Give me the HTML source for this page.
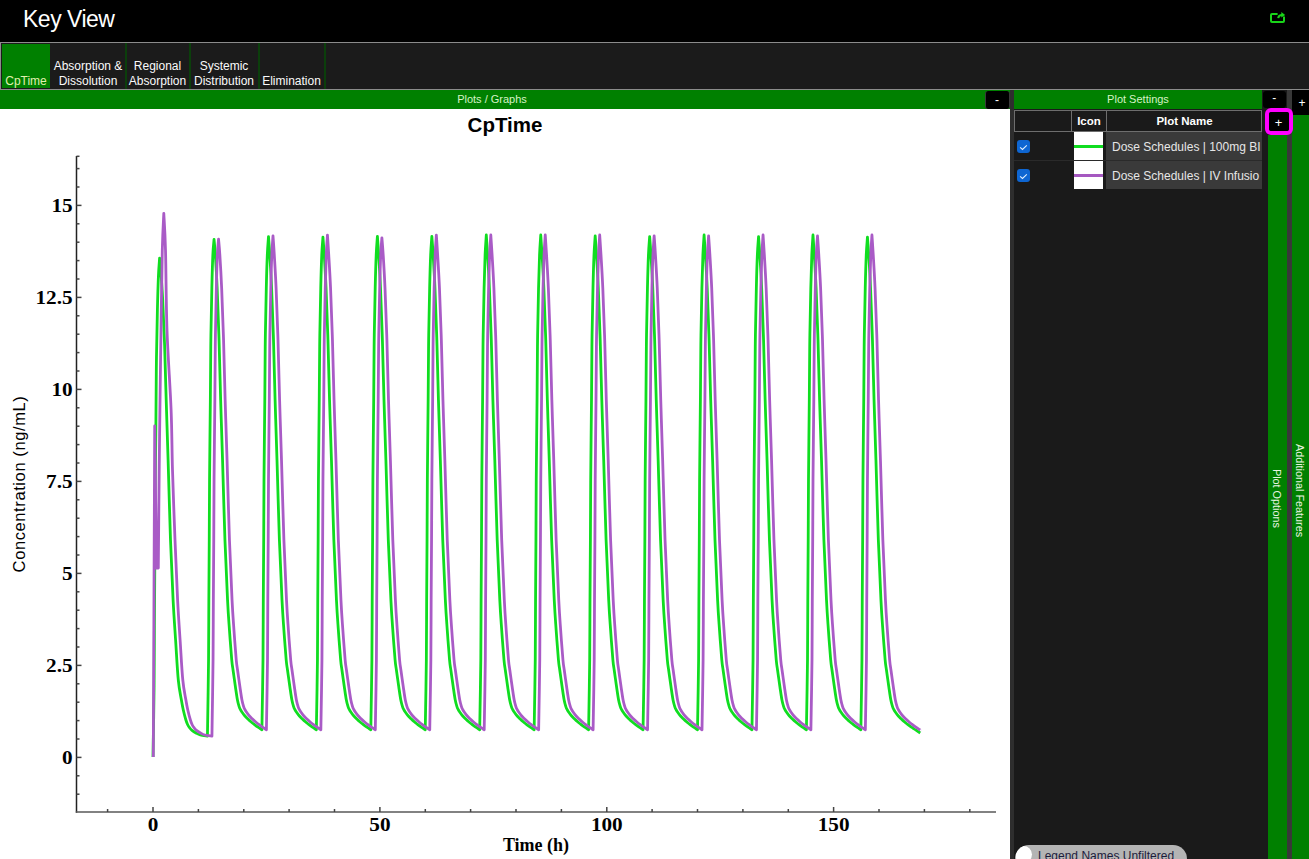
<!DOCTYPE html>
<html><head><meta charset="utf-8">
<style>
*{margin:0;padding:0;box-sizing:border-box}
html,body{width:1309px;height:859px;overflow:hidden;background:#000;font-family:"Liberation Sans",sans-serif}
.abs{position:absolute}
#title{left:23px;top:5px;font-size:23px;letter-spacing:-0.5px;color:#fff;line-height:28px;white-space:nowrap}
#hline{left:0;top:42px;width:1309px;height:1px;background:#8c8c8c}
#tabs{left:0;top:43px;width:1309px;height:47px;background:#1b1b1b;border-left:1px solid #8c8c8c;border-bottom:1px solid #8c8c8c}
.tab{position:absolute;top:0;height:46px;color:#fafafa;font-size:12px;line-height:14.4px;text-align:center;white-space:nowrap}
.tab span{position:absolute;left:0;right:0;bottom:0.8px}
.sep{position:absolute;top:0;width:2px;height:46px;background:#0b3f0b}
#greenbar{left:0;top:90px;width:1010px;padding-right:26px;height:19px;background:#008000;color:#d6f2c6;font-size:11px;text-align:center;line-height:18px}
.btn{position:absolute;background:#000;color:#fff;border-radius:3px;text-align:center;font-size:12px}
#plot{left:0;top:109px;width:1010px;height:750px;background:#fff}
#psep{left:1010px;top:90px;width:4px;height:769px;background:#2e2e2e}
#rpanel{left:1014px;top:109px;width:254px;height:750px;background:#1a1a1a}
#psbar{left:1014px;top:90px;width:248px;height:19px;background:#008000;color:#d6f2c6;font-size:11px;text-align:center;line-height:18px}
#rdiv{left:1287px;top:90px;width:5px;height:769px;background:#383838}
#rgap{left:1262px;top:109px;width:6px;height:750px;background:#1a1a1a}
.vstrip{position:absolute;background:#008000;color:#e8f4e0;font-size:10.8px}
.vtext{position:absolute;white-space:nowrap;transform-origin:0 0;transform:rotate(90deg)}
table{border-collapse:collapse}
#thead{left:1014px;top:110px;width:248px;height:22px;background:#1a1a1a;border:1px solid #6e6e6e}
.th{position:absolute;top:0;height:20px;color:#fff;font-weight:bold;font-size:11.5px;line-height:21px;text-align:center}
.row{position:absolute;left:1014px;width:248px;height:28px;background:#1a1a1a}
.chk{position:absolute;left:3px;top:8px;width:12.5px;height:12.5px;background:#0e66d2;border-radius:3px}
.icon{position:absolute;left:60px;top:0;width:29px;height:28px;background:#fff}
.icon i{position:absolute;left:0;width:29px;height:3px;top:13px}
.name{position:absolute;left:92px;top:0;width:156px;height:28px;background:#3a3a3a;color:#e6e6e6;font-size:12px;line-height:31px;padding-left:6px;white-space:nowrap;overflow:hidden}
#toggle{left:1015px;top:845px;width:172px;height:28px;background:#b4b4b4;border-radius:14px;overflow:hidden}
#toggle .knob{position:absolute;left:0px;top:1px;width:17px;height:17px;border-radius:9px;background:#fff}
#toggle span{position:absolute;left:23px;top:4px;font-size:12px;color:#1c1c3c;white-space:nowrap}
svg text{font-family:"Liberation Serif",serif;font-weight:bold}
</style></head>
<body>
<div id="title" class="abs">Key View</div>
<svg class="abs" style="left:1268px;top:10px" width="20" height="16" viewBox="0 0 20 16">
 <path d="M9.6,4 H4 Q3,4 3,5 V11 Q3,12 4,12 H15 Q16,12 16,11 V6.6" fill="none" stroke="#19d419" stroke-width="2"/>
 <path d="M10.2,8.2 C10.4,6.2 11.8,4.9 14.2,4.9" fill="none" stroke="#19d419" stroke-width="2"/>
 <path d="M13.3,2 L17.2,4.9 L13.3,7.6 Z" fill="#19d419"/>
</svg>
<div id="hline" class="abs"></div>
<div id="tabs" class="abs">
 <div class="tab" style="left:1px;top:1px;width:48px;height:44px;background:#008000;color:#e0f0b0"><span style="bottom:0">CpTime</span></div>
 <div class="tab" style="left:50px;width:74px"><span>Absorption &amp;<br>Dissolution</span></div>
 <div class="sep" style="left:124px"></div>
 <div class="tab" style="left:125px;width:63px"><span>Regional<br>Absorption</span></div>
 <div class="sep" style="left:188px"></div>
 <div class="tab" style="left:189px;width:68px"><span>Systemic<br>Distribution</span></div>
 <div class="sep" style="left:257px"></div>
 <div class="tab" style="left:258px;width:65px"><span>Elimination</span></div>
 <div class="sep" style="left:323px"></div>
</div>
<div id="greenbar" class="abs">Plots / Graphs</div>
<div class="btn" style="left:984.5px;top:90.5px;width:25px;height:18px;line-height:19px;border:1px solid #3a3a3a;border-top:0;border-bottom:0">-</div>
<div id="plot" class="abs"></div>
<div id="psep" class="abs"></div>
<div id="rpanel" class="abs"></div>
<div id="psbar" class="abs">Plot Settings</div>
<div class="abs" style="left:1262px;top:90px;width:25px;height:19px;background:#1a1a1a"></div>
<div class="btn" style="left:1262.5px;top:91px;width:23.5px;height:17px;line-height:15px">-</div>
<div id="rdiv" class="abs"></div>
<div class="btn" style="left:1292.5px;top:91px;width:19px;height:23.5px;line-height:25px;border-radius:3px">+</div>
<div class="vstrip" style="left:1292px;top:115px;width:17px;height:744px"><div class="vtext" style="left:14px;top:329px">Additional Features</div></div>
<div class="vstrip" style="left:1268px;top:135px;width:19px;height:724px"><div class="vtext" style="left:15px;top:334px">Plot Options</div></div>
<div class="abs" style="left:1265px;top:108px;width:28px;height:27px;border:4px solid #ff00ff;border-radius:6px;background:#000"></div>
<div class="btn" style="left:1268.5px;top:112px;width:20px;height:19px;line-height:21px;font-size:13px">+</div>
<div id="thead" class="abs">
 <div class="abs" style="left:56px;top:0;width:1px;height:20px;background:#6e6e6e"></div>
 <div class="abs" style="left:91px;top:0;width:1px;height:20px;background:#6e6e6e"></div>
 <div class="th" style="left:57px;width:34px">Icon</div>
 <div class="th" style="left:92px;width:155px">Plot Name</div>
</div>
<div class="row" style="top:132px"><div class="chk"><svg width="13" height="13" viewBox="0 0 13 13"><path d="M3.1,6.3 L5.5,8.5 L9.8,4.3" fill="none" stroke="#dfefff" stroke-width="1.1"/></svg></div><div class="icon"><i style="background:#10dd20"></i></div><div class="name">Dose Schedules | 100mg BI</div></div>
<div class="abs" style="left:1014px;top:160px;width:248px;height:1px;background:#2a2a2a"></div>
<div class="row" style="top:161px"><div class="chk"><svg width="13" height="13" viewBox="0 0 13 13"><path d="M3.1,6.3 L5.5,8.5 L9.8,4.3" fill="none" stroke="#dfefff" stroke-width="1.1"/></svg></div><div class="icon"><i style="background:#a558c0"></i></div><div class="name">Dose Schedules | IV Infusio</div></div>
<div id="toggle" class="abs"><div class="knob"></div><span>Legend Names Unfiltered</span></div>

<svg class="abs" style="left:0;top:0" width="1010" height="859" viewBox="0 0 1010 859">
 <text x="505" y="132" text-anchor="middle" style="font-family:'Liberation Sans',sans-serif;font-size:20.5px">CpTime</text>
 <g stroke="#444" stroke-width="1.5" fill="none">
  <line x1="76.5" y1="156" x2="76.5" y2="812.7" stroke="#222"/>
  <line x1="75.8" y1="812" x2="996" y2="812" stroke="#595959"/>
  <line x1="76.5" y1="156.3" x2="79.5" y2="156.3"/>
  <line x1="76.5" y1="794.2" x2="79.5" y2="794.2"/>
<line x1="76.5" y1="775.8" x2="79.5" y2="775.8"/>
<line x1="76.5" y1="757.4" x2="81.5" y2="757.4"/>
<line x1="76.5" y1="739" x2="79.5" y2="739"/>
<line x1="76.5" y1="720.6" x2="79.5" y2="720.6"/>
<line x1="76.5" y1="702.2" x2="79.5" y2="702.2"/>
<line x1="76.5" y1="683.8" x2="79.5" y2="683.8"/>
<line x1="76.5" y1="665.4" x2="81.5" y2="665.4"/>
<line x1="76.5" y1="647" x2="79.5" y2="647"/>
<line x1="76.5" y1="628.6" x2="79.5" y2="628.6"/>
<line x1="76.5" y1="610.2" x2="79.5" y2="610.2"/>
<line x1="76.5" y1="591.8" x2="79.5" y2="591.8"/>
<line x1="76.5" y1="573.4" x2="81.5" y2="573.4"/>
<line x1="76.5" y1="555" x2="79.5" y2="555"/>
<line x1="76.5" y1="536.6" x2="79.5" y2="536.6"/>
<line x1="76.5" y1="518.2" x2="79.5" y2="518.2"/>
<line x1="76.5" y1="499.8" x2="79.5" y2="499.8"/>
<line x1="76.5" y1="481.4" x2="81.5" y2="481.4"/>
<line x1="76.5" y1="463" x2="79.5" y2="463"/>
<line x1="76.5" y1="444.6" x2="79.5" y2="444.6"/>
<line x1="76.5" y1="426.2" x2="79.5" y2="426.2"/>
<line x1="76.5" y1="407.8" x2="79.5" y2="407.8"/>
<line x1="76.5" y1="389.4" x2="81.5" y2="389.4"/>
<line x1="76.5" y1="371" x2="79.5" y2="371"/>
<line x1="76.5" y1="352.6" x2="79.5" y2="352.6"/>
<line x1="76.5" y1="334.2" x2="79.5" y2="334.2"/>
<line x1="76.5" y1="315.8" x2="79.5" y2="315.8"/>
<line x1="76.5" y1="297.4" x2="81.5" y2="297.4"/>
<line x1="76.5" y1="279" x2="79.5" y2="279"/>
<line x1="76.5" y1="260.6" x2="79.5" y2="260.6"/>
<line x1="76.5" y1="242.2" x2="79.5" y2="242.2"/>
<line x1="76.5" y1="223.8" x2="79.5" y2="223.8"/>
<line x1="76.5" y1="205.4" x2="81.5" y2="205.4"/>
<line x1="76.5" y1="187" x2="79.5" y2="187"/>
<line x1="76.5" y1="168.6" x2="79.5" y2="168.6"/>
<line x1="107.6" y1="812" x2="107.6" y2="809"/>
<line x1="153" y1="812" x2="153" y2="807"/>
<line x1="198.4" y1="812" x2="198.4" y2="809"/>
<line x1="243.8" y1="812" x2="243.8" y2="809"/>
<line x1="289.1" y1="812" x2="289.1" y2="809"/>
<line x1="334.5" y1="812" x2="334.5" y2="809"/>
<line x1="379.9" y1="812" x2="379.9" y2="807"/>
<line x1="425.3" y1="812" x2="425.3" y2="809"/>
<line x1="470.6" y1="812" x2="470.6" y2="809"/>
<line x1="516" y1="812" x2="516" y2="809"/>
<line x1="561.4" y1="812" x2="561.4" y2="809"/>
<line x1="606.8" y1="812" x2="606.8" y2="807"/>
<line x1="652.1" y1="812" x2="652.1" y2="809"/>
<line x1="697.5" y1="812" x2="697.5" y2="809"/>
<line x1="742.9" y1="812" x2="742.9" y2="809"/>
<line x1="788.3" y1="812" x2="788.3" y2="809"/>
<line x1="833.6" y1="812" x2="833.6" y2="807"/>
<line x1="879" y1="812" x2="879" y2="809"/>
<line x1="924.4" y1="812" x2="924.4" y2="809"/>
<line x1="969.8" y1="812" x2="969.8" y2="809"/>
 </g>
 <g style="font-size:18px" fill="#000"><text transform="translate(72.6,764.4) scale(1.18,1)" text-anchor="end">0</text><text transform="translate(72.6,672.4) scale(1.18,1)" text-anchor="end">2.5</text><text transform="translate(72.6,580.4) scale(1.18,1)" text-anchor="end">5</text><text transform="translate(72.6,488.4) scale(1.18,1)" text-anchor="end">7.5</text><text transform="translate(72.6,396.4) scale(1.18,1)" text-anchor="end">10</text><text transform="translate(72.6,304.4) scale(1.18,1)" text-anchor="end">12.5</text><text transform="translate(72.6,212.4) scale(1.18,1)" text-anchor="end">15</text><text transform="translate(153,830.8) scale(1.18,1)" text-anchor="middle">0</text><text transform="translate(379.9,830.8) scale(1.18,1)" text-anchor="middle">50</text><text transform="translate(606.8,830.8) scale(1.18,1)" text-anchor="middle">100</text><text transform="translate(833.6,830.8) scale(1.18,1)" text-anchor="middle">150</text></g>
 <text x="536" y="851" text-anchor="middle" style="font-size:18px">Time (h)</text>
 <text transform="translate(25,484) rotate(-90)" text-anchor="middle" style="font-family:'Liberation Sans',sans-serif;font-weight:normal;font-size:16.5px;letter-spacing:0.6px">Concentration (ng/mL)</text>
 <path d="M153,757 C153.18,745.20 153.87,708.13 154.10,686.22 C154.33,664.31 154.28,645.78 154.40,625.55 C154.52,605.33 154.68,585.11 154.80,564.89 C154.92,544.66 154.92,527.81 155.10,504.22 C155.28,480.63 155.68,446.92 155.90,423.33 C156.12,399.74 156.15,381.54 156.40,362.66 C156.65,343.79 157.07,324.41 157.40,310.08 C157.73,295.76 158.03,285.36 158.40,276.72 C158.77,268.07 159.40,261.29 159.60,258.20 C159.82,260.50 160.38,265.03 160.90,272.00 C161.42,278.97 162.08,287.83 162.70,300.00 C163.32,312.17 164.02,328.33 164.60,345.00 C165.18,361.67 165.62,380.83 166.20,400.00 C166.78,419.17 167.38,436.67 168.10,460.00 C168.82,483.33 169.67,516.67 170.50,540.00 C171.33,563.33 172.25,583.33 173.10,600.00 C173.95,616.67 174.73,626.67 175.60,640.00 C176.47,653.33 177.33,670.00 178.30,680.00 C179.27,690.00 180.57,695.00 181.40,700.00 C182.23,705.00 182.55,706.67 183.30,710.00 C184.05,713.33 185.15,717.50 185.90,720.00 C186.65,722.50 187.15,723.67 187.80,725.00 C188.45,726.33 189.10,727.12 189.80,728.00 C190.50,728.88 190.97,729.47 192.00,730.30 C193.03,731.13 194.62,732.22 196.00,733.00 C197.38,733.78 198.39,734.50 200.30,735.00 C202.21,735.50 206.26,735.83 207.45,736.00 C207.63,723.33 208.32,682.67 208.55,660.00 C208.78,637.33 208.73,620.00 208.85,600.00 C208.97,580.00 209.13,560.00 209.25,540.00 C209.37,520.00 209.37,503.33 209.55,480.00 C209.73,456.67 210.13,423.33 210.35,400.00 C210.57,376.67 210.60,358.67 210.85,340.00 C211.10,321.33 211.52,302.17 211.85,288.00 C212.18,273.83 212.48,263.10 212.85,255.00 C213.22,246.90 213.85,242.00 214.05,239.40 C214.27,242.00 214.83,246.90 215.35,255.00 C215.87,263.10 216.53,273.83 217.15,288.00 C217.77,302.17 218.47,321.33 219.05,340.00 C219.63,358.67 220.07,380.00 220.65,400.00 C221.23,420.00 221.83,436.67 222.55,460.00 C223.27,483.33 224.12,516.67 224.95,540.00 C225.78,563.33 226.80,585.00 227.55,600.00 C228.30,615.00 228.75,620.00 229.45,630.00 C230.15,640.00 231.15,653.33 231.75,660.00 C232.35,666.67 232.43,665.50 233.05,670.00 C233.67,674.50 234.72,682.00 235.45,687.00 C236.18,692.00 236.83,696.73 237.45,700.00 C238.07,703.27 238.62,704.93 239.15,706.60 C239.68,708.27 240.10,708.97 240.65,710.00 C241.20,711.03 241.73,711.80 242.45,712.80 C243.17,713.80 244.03,714.97 244.95,716.00 C245.87,717.03 246.95,718.03 247.95,719.00 C248.95,719.97 249.95,720.93 250.95,721.80 C251.95,722.67 252.78,723.30 253.95,724.20 C255.12,725.10 256.62,726.28 257.95,727.20 C259.27,728.12 261.24,729.28 261.90,729.70 C262.08,718.08 262.77,681.62 263.00,660.00 C263.23,638.38 263.18,620.00 263.30,600.00 C263.42,580.00 263.58,560.00 263.70,540.00 C263.82,520.00 263.82,503.33 264.00,480.00 C264.18,456.67 264.58,423.33 264.80,400.00 C265.02,376.67 265.05,358.67 265.30,340.00 C265.55,321.33 265.97,302.17 266.30,288.00 C266.63,273.83 266.93,263.55 267.30,255.00 C267.67,246.45 268.30,239.75 268.50,236.70 C268.72,239.75 269.28,246.45 269.80,255.00 C270.32,263.55 270.98,273.83 271.60,288.00 C272.22,302.17 272.92,321.33 273.50,340.00 C274.08,358.67 274.52,380.00 275.10,400.00 C275.68,420.00 276.28,436.67 277.00,460.00 C277.72,483.33 278.57,516.67 279.40,540.00 C280.23,563.33 281.25,585.00 282.00,600.00 C282.75,615.00 283.20,620.00 283.90,630.00 C284.60,640.00 285.60,653.33 286.20,660.00 C286.80,666.67 286.88,665.50 287.50,670.00 C288.12,674.50 289.17,682.00 289.90,687.00 C290.63,692.00 291.28,696.73 291.90,700.00 C292.52,703.27 293.07,704.93 293.60,706.60 C294.13,708.27 294.55,708.97 295.10,710.00 C295.65,711.03 296.18,711.80 296.90,712.80 C297.62,713.80 298.48,714.97 299.40,716.00 C300.32,717.03 301.40,718.03 302.40,719.00 C303.40,719.97 304.40,720.93 305.40,721.80 C306.40,722.67 307.23,723.30 308.40,724.20 C309.57,725.10 311.07,726.28 312.40,727.20 C313.72,728.12 315.69,729.28 316.35,729.70 C316.53,718.08 317.22,681.62 317.45,660.00 C317.68,638.38 317.63,620.00 317.75,600.00 C317.87,580.00 318.03,560.00 318.15,540.00 C318.27,520.00 318.27,503.33 318.45,480.00 C318.63,456.67 319.03,423.33 319.25,400.00 C319.47,376.67 319.50,358.67 319.75,340.00 C320.00,321.33 320.42,302.17 320.75,288.00 C321.08,273.83 321.38,263.47 321.75,255.00 C322.12,246.53 322.75,240.17 322.95,237.20 C323.17,240.17 323.73,246.53 324.25,255.00 C324.77,263.47 325.43,273.83 326.05,288.00 C326.67,302.17 327.37,321.33 327.95,340.00 C328.53,358.67 328.97,380.00 329.55,400.00 C330.13,420.00 330.73,436.67 331.45,460.00 C332.17,483.33 333.02,516.67 333.85,540.00 C334.68,563.33 335.70,585.00 336.45,600.00 C337.20,615.00 337.65,620.00 338.35,630.00 C339.05,640.00 340.05,653.33 340.65,660.00 C341.25,666.67 341.33,665.50 341.95,670.00 C342.57,674.50 343.62,682.00 344.35,687.00 C345.08,692.00 345.73,696.73 346.35,700.00 C346.97,703.27 347.52,704.93 348.05,706.60 C348.58,708.27 349.00,708.97 349.55,710.00 C350.10,711.03 350.63,711.80 351.35,712.80 C352.07,713.80 352.93,714.97 353.85,716.00 C354.77,717.03 355.85,718.03 356.85,719.00 C357.85,719.97 358.85,720.93 359.85,721.80 C360.85,722.67 361.68,723.30 362.85,724.20 C364.02,725.10 365.53,726.28 366.85,727.20 C368.18,728.12 370.14,729.28 370.80,729.70 C370.98,718.08 371.67,681.62 371.90,660.00 C372.13,638.38 372.08,620.00 372.20,600.00 C372.32,580.00 372.48,560.00 372.60,540.00 C372.72,520.00 372.72,503.33 372.90,480.00 C373.08,456.67 373.48,423.33 373.70,400.00 C373.92,376.67 373.95,358.67 374.20,340.00 C374.45,321.33 374.87,302.17 375.20,288.00 C375.53,273.83 375.83,263.60 376.20,255.00 C376.57,246.40 377.20,239.50 377.40,236.40 C377.62,239.50 378.18,246.40 378.70,255.00 C379.22,263.60 379.88,273.83 380.50,288.00 C381.12,302.17 381.82,321.33 382.40,340.00 C382.98,358.67 383.42,380.00 384.00,400.00 C384.58,420.00 385.18,436.67 385.90,460.00 C386.62,483.33 387.47,516.67 388.30,540.00 C389.13,563.33 390.15,585.00 390.90,600.00 C391.65,615.00 392.10,620.00 392.80,630.00 C393.50,640.00 394.50,653.33 395.10,660.00 C395.70,666.67 395.78,665.50 396.40,670.00 C397.02,674.50 398.07,682.00 398.80,687.00 C399.53,692.00 400.18,696.73 400.80,700.00 C401.42,703.27 401.97,704.93 402.50,706.60 C403.03,708.27 403.45,708.97 404.00,710.00 C404.55,711.03 405.08,711.80 405.80,712.80 C406.52,713.80 407.38,714.97 408.30,716.00 C409.22,717.03 410.30,718.03 411.30,719.00 C412.30,719.97 413.30,720.93 414.30,721.80 C415.30,722.67 416.13,723.30 417.30,724.20 C418.47,725.10 419.98,726.28 421.30,727.20 C422.62,728.12 424.59,729.28 425.25,729.70 C425.43,718.08 426.12,681.62 426.35,660.00 C426.58,638.38 426.53,620.00 426.65,600.00 C426.77,580.00 426.93,560.00 427.05,540.00 C427.17,520.00 427.17,503.33 427.35,480.00 C427.53,456.67 427.93,423.33 428.15,400.00 C428.37,376.67 428.40,358.67 428.65,340.00 C428.90,321.33 429.32,302.17 429.65,288.00 C429.98,273.83 430.28,263.60 430.65,255.00 C431.02,246.40 431.65,239.50 431.85,236.40 C432.07,239.50 432.63,246.40 433.15,255.00 C433.67,263.60 434.33,273.83 434.95,288.00 C435.57,302.17 436.27,321.33 436.85,340.00 C437.43,358.67 437.87,380.00 438.45,400.00 C439.03,420.00 439.63,436.67 440.35,460.00 C441.07,483.33 441.92,516.67 442.75,540.00 C443.58,563.33 444.60,585.00 445.35,600.00 C446.10,615.00 446.55,620.00 447.25,630.00 C447.95,640.00 448.95,653.33 449.55,660.00 C450.15,666.67 450.23,665.50 450.85,670.00 C451.47,674.50 452.52,682.00 453.25,687.00 C453.98,692.00 454.63,696.73 455.25,700.00 C455.87,703.27 456.42,704.93 456.95,706.60 C457.48,708.27 457.90,708.97 458.45,710.00 C459.00,711.03 459.53,711.80 460.25,712.80 C460.97,713.80 461.83,714.97 462.75,716.00 C463.67,717.03 464.75,718.03 465.75,719.00 C466.75,719.97 467.75,720.93 468.75,721.80 C469.75,722.67 470.58,723.30 471.75,724.20 C472.92,725.10 474.43,726.28 475.75,727.20 C477.07,728.12 479.04,729.28 479.70,729.70 C479.88,718.08 480.57,681.62 480.80,660.00 C481.03,638.38 480.98,620.00 481.10,600.00 C481.22,580.00 481.38,560.00 481.50,540.00 C481.62,520.00 481.62,503.33 481.80,480.00 C481.98,456.67 482.38,423.33 482.60,400.00 C482.82,376.67 482.85,358.67 483.10,340.00 C483.35,321.33 483.77,302.17 484.10,288.00 C484.43,273.83 484.73,263.83 485.10,255.00 C485.47,246.17 486.10,238.33 486.30,235.00 C486.52,238.33 487.08,246.17 487.60,255.00 C488.12,263.83 488.78,273.83 489.40,288.00 C490.02,302.17 490.72,321.33 491.30,340.00 C491.88,358.67 492.32,380.00 492.90,400.00 C493.48,420.00 494.08,436.67 494.80,460.00 C495.52,483.33 496.37,516.67 497.20,540.00 C498.03,563.33 499.05,585.00 499.80,600.00 C500.55,615.00 501.00,620.00 501.70,630.00 C502.40,640.00 503.40,653.33 504.00,660.00 C504.60,666.67 504.68,665.50 505.30,670.00 C505.92,674.50 506.97,682.00 507.70,687.00 C508.43,692.00 509.08,696.73 509.70,700.00 C510.32,703.27 510.87,704.93 511.40,706.60 C511.93,708.27 512.35,708.97 512.90,710.00 C513.45,711.03 513.98,711.80 514.70,712.80 C515.42,713.80 516.28,714.97 517.20,716.00 C518.12,717.03 519.20,718.03 520.20,719.00 C521.20,719.97 522.20,720.93 523.20,721.80 C524.20,722.67 525.03,723.30 526.20,724.20 C527.37,725.10 528.88,726.28 530.20,727.20 C531.53,728.12 533.49,729.28 534.15,729.70 C534.33,718.08 535.02,681.62 535.25,660.00 C535.48,638.38 535.43,620.00 535.55,600.00 C535.67,580.00 535.83,560.00 535.95,540.00 C536.07,520.00 536.07,503.33 536.25,480.00 C536.43,456.67 536.83,423.33 537.05,400.00 C537.27,376.67 537.30,358.67 537.55,340.00 C537.80,321.33 538.22,302.17 538.55,288.00 C538.88,273.83 539.18,263.83 539.55,255.00 C539.92,246.17 540.55,238.33 540.75,235.00 C540.97,238.33 541.53,246.17 542.05,255.00 C542.57,263.83 543.23,273.83 543.85,288.00 C544.47,302.17 545.17,321.33 545.75,340.00 C546.33,358.67 546.77,380.00 547.35,400.00 C547.93,420.00 548.53,436.67 549.25,460.00 C549.97,483.33 550.82,516.67 551.65,540.00 C552.48,563.33 553.50,585.00 554.25,600.00 C555.00,615.00 555.45,620.00 556.15,630.00 C556.85,640.00 557.85,653.33 558.45,660.00 C559.05,666.67 559.13,665.50 559.75,670.00 C560.37,674.50 561.42,682.00 562.15,687.00 C562.88,692.00 563.53,696.73 564.15,700.00 C564.77,703.27 565.32,704.93 565.85,706.60 C566.38,708.27 566.80,708.97 567.35,710.00 C567.90,711.03 568.43,711.80 569.15,712.80 C569.87,713.80 570.73,714.97 571.65,716.00 C572.57,717.03 573.65,718.03 574.65,719.00 C575.65,719.97 576.65,720.93 577.65,721.80 C578.65,722.67 579.48,723.30 580.65,724.20 C581.82,725.10 583.33,726.28 584.65,727.20 C585.98,728.12 587.94,729.28 588.60,729.70 C588.78,718.08 589.47,681.62 589.70,660.00 C589.93,638.38 589.88,620.00 590.00,600.00 C590.12,580.00 590.28,560.00 590.40,540.00 C590.52,520.00 590.52,503.33 590.70,480.00 C590.88,456.67 591.28,423.33 591.50,400.00 C591.72,376.67 591.75,358.67 592.00,340.00 C592.25,321.33 592.67,302.17 593.00,288.00 C593.33,273.83 593.63,263.70 594.00,255.00 C594.37,246.30 595.00,239.00 595.20,235.80 C595.42,239.00 595.98,246.30 596.50,255.00 C597.02,263.70 597.68,273.83 598.30,288.00 C598.92,302.17 599.62,321.33 600.20,340.00 C600.78,358.67 601.22,380.00 601.80,400.00 C602.38,420.00 602.98,436.67 603.70,460.00 C604.42,483.33 605.27,516.67 606.10,540.00 C606.93,563.33 607.95,585.00 608.70,600.00 C609.45,615.00 609.90,620.00 610.60,630.00 C611.30,640.00 612.30,653.33 612.90,660.00 C613.50,666.67 613.58,665.50 614.20,670.00 C614.82,674.50 615.87,682.00 616.60,687.00 C617.33,692.00 617.98,696.73 618.60,700.00 C619.22,703.27 619.77,704.93 620.30,706.60 C620.83,708.27 621.25,708.97 621.80,710.00 C622.35,711.03 622.88,711.80 623.60,712.80 C624.32,713.80 625.18,714.97 626.10,716.00 C627.02,717.03 628.10,718.03 629.10,719.00 C630.10,719.97 631.10,720.93 632.10,721.80 C633.10,722.67 633.93,723.30 635.10,724.20 C636.27,725.10 637.77,726.28 639.10,727.20 C640.43,728.12 642.39,729.28 643.05,729.70 C643.23,718.08 643.92,681.62 644.15,660.00 C644.38,638.38 644.33,620.00 644.45,600.00 C644.57,580.00 644.73,560.00 644.85,540.00 C644.97,520.00 644.97,503.33 645.15,480.00 C645.33,456.67 645.73,423.33 645.95,400.00 C646.17,376.67 646.20,358.67 646.45,340.00 C646.70,321.33 647.12,302.17 647.45,288.00 C647.78,273.83 648.08,263.55 648.45,255.00 C648.82,246.45 649.45,239.75 649.65,236.70 C649.87,239.75 650.43,246.45 650.95,255.00 C651.47,263.55 652.13,273.83 652.75,288.00 C653.37,302.17 654.07,321.33 654.65,340.00 C655.23,358.67 655.67,380.00 656.25,400.00 C656.83,420.00 657.43,436.67 658.15,460.00 C658.87,483.33 659.72,516.67 660.55,540.00 C661.38,563.33 662.40,585.00 663.15,600.00 C663.90,615.00 664.35,620.00 665.05,630.00 C665.75,640.00 666.75,653.33 667.35,660.00 C667.95,666.67 668.03,665.50 668.65,670.00 C669.27,674.50 670.32,682.00 671.05,687.00 C671.78,692.00 672.43,696.73 673.05,700.00 C673.67,703.27 674.22,704.93 674.75,706.60 C675.28,708.27 675.70,708.97 676.25,710.00 C676.80,711.03 677.33,711.80 678.05,712.80 C678.77,713.80 679.63,714.97 680.55,716.00 C681.47,717.03 682.55,718.03 683.55,719.00 C684.55,719.97 685.55,720.93 686.55,721.80 C687.55,722.67 688.38,723.30 689.55,724.20 C690.72,725.10 692.22,726.28 693.55,727.20 C694.88,728.12 696.84,729.28 697.50,729.70 C697.68,718.08 698.37,681.62 698.60,660.00 C698.83,638.38 698.78,620.00 698.90,600.00 C699.02,580.00 699.18,560.00 699.30,540.00 C699.42,520.00 699.42,503.33 699.60,480.00 C699.78,456.67 700.18,423.33 700.40,400.00 C700.62,376.67 700.65,358.67 700.90,340.00 C701.15,321.33 701.57,302.17 701.90,288.00 C702.23,273.83 702.53,263.83 702.90,255.00 C703.27,246.17 703.90,238.33 704.10,235.00 C704.32,238.33 704.88,246.17 705.40,255.00 C705.92,263.83 706.58,273.83 707.20,288.00 C707.82,302.17 708.52,321.33 709.10,340.00 C709.68,358.67 710.12,380.00 710.70,400.00 C711.28,420.00 711.88,436.67 712.60,460.00 C713.32,483.33 714.17,516.67 715.00,540.00 C715.83,563.33 716.85,585.00 717.60,600.00 C718.35,615.00 718.80,620.00 719.50,630.00 C720.20,640.00 721.20,653.33 721.80,660.00 C722.40,666.67 722.48,665.50 723.10,670.00 C723.72,674.50 724.77,682.00 725.50,687.00 C726.23,692.00 726.88,696.73 727.50,700.00 C728.12,703.27 728.67,704.93 729.20,706.60 C729.73,708.27 730.15,708.97 730.70,710.00 C731.25,711.03 731.78,711.80 732.50,712.80 C733.22,713.80 734.08,714.97 735.00,716.00 C735.92,717.03 737.00,718.03 738.00,719.00 C739.00,719.97 740.00,720.93 741.00,721.80 C742.00,722.67 742.83,723.30 744.00,724.20 C745.17,725.10 746.67,726.28 748.00,727.20 C749.33,728.12 751.29,729.28 751.95,729.70 C752.13,718.08 752.82,681.62 753.05,660.00 C753.28,638.38 753.23,620.00 753.35,600.00 C753.47,580.00 753.63,560.00 753.75,540.00 C753.87,520.00 753.87,503.33 754.05,480.00 C754.23,456.67 754.63,423.33 754.85,400.00 C755.07,376.67 755.10,358.67 755.35,340.00 C755.60,321.33 756.02,302.17 756.35,288.00 C756.68,273.83 756.98,263.55 757.35,255.00 C757.72,246.45 758.35,239.75 758.55,236.70 C758.77,239.75 759.33,246.45 759.85,255.00 C760.37,263.55 761.03,273.83 761.65,288.00 C762.27,302.17 762.97,321.33 763.55,340.00 C764.13,358.67 764.57,380.00 765.15,400.00 C765.73,420.00 766.33,436.67 767.05,460.00 C767.77,483.33 768.62,516.67 769.45,540.00 C770.28,563.33 771.30,585.00 772.05,600.00 C772.80,615.00 773.25,620.00 773.95,630.00 C774.65,640.00 775.65,653.33 776.25,660.00 C776.85,666.67 776.93,665.50 777.55,670.00 C778.17,674.50 779.22,682.00 779.95,687.00 C780.68,692.00 781.33,696.73 781.95,700.00 C782.57,703.27 783.12,704.93 783.65,706.60 C784.18,708.27 784.60,708.97 785.15,710.00 C785.70,711.03 786.23,711.80 786.95,712.80 C787.67,713.80 788.53,714.97 789.45,716.00 C790.37,717.03 791.45,718.03 792.45,719.00 C793.45,719.97 794.45,720.93 795.45,721.80 C796.45,722.67 797.28,723.30 798.45,724.20 C799.62,725.10 801.12,726.28 802.45,727.20 C803.78,728.12 805.74,729.28 806.40,729.70 C806.58,718.08 807.27,681.62 807.50,660.00 C807.73,638.38 807.68,620.00 807.80,600.00 C807.92,580.00 808.08,560.00 808.20,540.00 C808.32,520.00 808.32,503.33 808.50,480.00 C808.68,456.67 809.08,423.33 809.30,400.00 C809.52,376.67 809.55,358.67 809.80,340.00 C810.05,321.33 810.47,302.17 810.80,288.00 C811.13,273.83 811.43,263.83 811.80,255.00 C812.17,246.17 812.80,238.33 813.00,235.00 C813.22,238.33 813.78,246.17 814.30,255.00 C814.82,263.83 815.48,273.83 816.10,288.00 C816.72,302.17 817.42,321.33 818.00,340.00 C818.58,358.67 819.02,380.00 819.60,400.00 C820.18,420.00 820.78,436.67 821.50,460.00 C822.22,483.33 823.07,516.67 823.90,540.00 C824.73,563.33 825.75,585.00 826.50,600.00 C827.25,615.00 827.70,620.00 828.40,630.00 C829.10,640.00 830.10,653.33 830.70,660.00 C831.30,666.67 831.38,665.50 832.00,670.00 C832.62,674.50 833.67,682.00 834.40,687.00 C835.13,692.00 835.78,696.73 836.40,700.00 C837.02,703.27 837.57,704.93 838.10,706.60 C838.63,708.27 839.05,708.97 839.60,710.00 C840.15,711.03 840.68,711.80 841.40,712.80 C842.12,713.80 842.98,714.97 843.90,716.00 C844.82,717.03 845.90,718.03 846.90,719.00 C847.90,719.97 848.90,720.93 849.90,721.80 C850.90,722.67 851.73,723.30 852.90,724.20 C854.07,725.10 855.58,726.28 856.90,727.20 C858.23,728.12 860.19,729.28 860.85,729.70 C861.03,718.08 861.72,681.62 861.95,660.00 C862.18,638.38 862.13,620.00 862.25,600.00 C862.37,580.00 862.53,560.00 862.65,540.00 C862.77,520.00 862.77,503.33 862.95,480.00 C863.13,456.67 863.53,423.33 863.75,400.00 C863.97,376.67 864.00,358.67 864.25,340.00 C864.50,321.33 864.92,302.17 865.25,288.00 C865.58,273.83 865.88,263.47 866.25,255.00 C866.62,246.53 867.25,240.17 867.45,237.20 C867.67,240.17 868.23,246.53 868.75,255.00 C869.27,263.47 869.93,273.83 870.55,288.00 C871.17,302.17 871.87,321.33 872.45,340.00 C873.03,358.67 873.47,380.00 874.05,400.00 C874.63,420.00 875.23,436.67 875.95,460.00 C876.67,483.33 877.52,516.67 878.35,540.00 C879.18,563.33 880.20,585.00 880.95,600.00 C881.70,615.00 882.15,620.00 882.85,630.00 C883.55,640.00 884.55,653.33 885.15,660.00 C885.75,666.67 885.83,665.50 886.45,670.00 C887.07,674.50 888.12,682.00 888.85,687.00 C889.58,692.00 890.23,696.73 890.85,700.00 C891.47,703.27 892.02,704.93 892.55,706.60 C893.08,708.27 893.50,708.97 894.05,710.00 C894.60,711.03 895.13,711.80 895.85,712.80 C896.57,713.80 897.43,714.97 898.35,716.00 C899.27,717.03 900.35,718.03 901.35,719.00 C902.35,719.97 903.35,720.93 904.35,721.80 C905.35,722.67 906.18,723.30 907.35,724.20 C908.52,725.10 910.02,726.28 911.35,727.20 C912.68,728.12 913.82,728.73 915.30,729.70 C916.78,730.67 919.42,732.45 920.25,733.00" fill="none" stroke="#10dd20" stroke-width="2.8" stroke-linejoin="round"/>
 <path d="M153.3,757 C153.53,701.83 154.47,481.17 154.70,426.00 C155.00,449.67 156.20,544.33 156.50,568.00 C156.80,568.00 158.00,568.00 158.30,568.00 C158.45,551.67 158.93,496.33 159.20,470.00 C159.47,443.67 159.60,433.33 159.90,410.00 C160.20,386.67 160.60,356.67 161.00,330.00 C161.40,303.33 161.83,269.43 162.30,250.00 C162.77,230.57 163.55,219.50 163.80,213.40 C164.08,219.50 164.97,230.57 165.50,250.00 C166.03,269.43 166.07,303.33 167.00,330.00 C167.93,356.67 170.18,386.67 171.10,410.00 C172.02,433.33 171.85,448.33 172.50,470.00 C173.15,491.67 174.15,518.33 175.00,540.00 C175.85,561.67 176.75,583.33 177.60,600.00 C178.45,616.67 179.23,626.67 180.10,640.00 C180.97,653.33 181.83,670.00 182.80,680.00 C183.77,690.00 185.07,695.00 185.90,700.00 C186.73,705.00 187.05,706.67 187.80,710.00 C188.55,713.33 189.65,717.50 190.40,720.00 C191.15,722.50 191.65,723.67 192.30,725.00 C192.95,726.33 193.60,727.12 194.30,728.00 C195.00,728.88 195.47,729.47 196.50,730.30 C197.53,731.13 199.12,732.22 200.50,733.00 C201.88,733.78 202.89,734.50 204.80,735.00 C206.71,735.50 210.76,735.83 211.95,736.00 C212.13,723.33 212.82,682.67 213.05,660.00 C213.28,637.33 213.23,620.00 213.35,600.00 C213.47,580.00 213.63,560.00 213.75,540.00 C213.87,520.00 213.87,503.33 214.05,480.00 C214.23,456.67 214.63,423.33 214.85,400.00 C215.07,376.67 215.10,358.67 215.35,340.00 C215.60,321.33 216.02,302.17 216.35,288.00 C216.68,273.83 216.98,263.15 217.35,255.00 C217.72,246.85 218.35,241.75 218.55,239.10 C218.77,241.75 219.33,246.85 219.85,255.00 C220.37,263.15 221.03,273.83 221.65,288.00 C222.27,302.17 222.97,321.33 223.55,340.00 C224.13,358.67 224.57,380.00 225.15,400.00 C225.73,420.00 226.33,436.67 227.05,460.00 C227.77,483.33 228.62,516.67 229.45,540.00 C230.28,563.33 231.30,585.00 232.05,600.00 C232.80,615.00 233.25,620.00 233.95,630.00 C234.65,640.00 235.65,653.33 236.25,660.00 C236.85,666.67 236.93,665.50 237.55,670.00 C238.17,674.50 239.22,682.00 239.95,687.00 C240.68,692.00 241.33,696.73 241.95,700.00 C242.57,703.27 243.12,704.93 243.65,706.60 C244.18,708.27 244.60,708.97 245.15,710.00 C245.70,711.03 246.23,711.80 246.95,712.80 C247.67,713.80 248.53,714.97 249.45,716.00 C250.37,717.03 251.45,718.03 252.45,719.00 C253.45,719.97 254.45,720.93 255.45,721.80 C256.45,722.67 257.28,723.30 258.45,724.20 C259.62,725.10 261.12,726.28 262.45,727.20 C263.77,728.12 265.74,729.28 266.40,729.70 C266.58,718.08 267.27,681.62 267.50,660.00 C267.73,638.38 267.68,620.00 267.80,600.00 C267.92,580.00 268.08,560.00 268.20,540.00 C268.32,520.00 268.32,503.33 268.50,480.00 C268.68,456.67 269.08,423.33 269.30,400.00 C269.52,376.67 269.55,358.67 269.80,340.00 C270.05,321.33 270.47,302.17 270.80,288.00 C271.13,273.83 271.43,263.70 271.80,255.00 C272.17,246.30 272.80,239.00 273.00,235.80 C273.22,239.00 273.78,246.30 274.30,255.00 C274.82,263.70 275.48,273.83 276.10,288.00 C276.72,302.17 277.42,321.33 278.00,340.00 C278.58,358.67 279.02,380.00 279.60,400.00 C280.18,420.00 280.78,436.67 281.50,460.00 C282.22,483.33 283.07,516.67 283.90,540.00 C284.73,563.33 285.75,585.00 286.50,600.00 C287.25,615.00 287.70,620.00 288.40,630.00 C289.10,640.00 290.10,653.33 290.70,660.00 C291.30,666.67 291.38,665.50 292.00,670.00 C292.62,674.50 293.67,682.00 294.40,687.00 C295.13,692.00 295.78,696.73 296.40,700.00 C297.02,703.27 297.57,704.93 298.10,706.60 C298.63,708.27 299.05,708.97 299.60,710.00 C300.15,711.03 300.68,711.80 301.40,712.80 C302.12,713.80 302.98,714.97 303.90,716.00 C304.82,717.03 305.90,718.03 306.90,719.00 C307.90,719.97 308.90,720.93 309.90,721.80 C310.90,722.67 311.73,723.30 312.90,724.20 C314.07,725.10 315.57,726.28 316.90,727.20 C318.22,728.12 320.19,729.28 320.85,729.70 C321.03,718.08 321.72,681.62 321.95,660.00 C322.18,638.38 322.13,620.00 322.25,600.00 C322.37,580.00 322.53,560.00 322.65,540.00 C322.77,520.00 322.77,503.33 322.95,480.00 C323.13,456.67 323.53,423.33 323.75,400.00 C323.97,376.67 324.00,358.67 324.25,340.00 C324.50,321.33 324.92,302.17 325.25,288.00 C325.58,273.83 325.88,263.80 326.25,255.00 C326.62,246.20 327.25,238.50 327.45,235.20 C327.67,238.50 328.23,246.20 328.75,255.00 C329.27,263.80 329.93,273.83 330.55,288.00 C331.17,302.17 331.87,321.33 332.45,340.00 C333.03,358.67 333.47,380.00 334.05,400.00 C334.63,420.00 335.23,436.67 335.95,460.00 C336.67,483.33 337.52,516.67 338.35,540.00 C339.18,563.33 340.20,585.00 340.95,600.00 C341.70,615.00 342.15,620.00 342.85,630.00 C343.55,640.00 344.55,653.33 345.15,660.00 C345.75,666.67 345.83,665.50 346.45,670.00 C347.07,674.50 348.12,682.00 348.85,687.00 C349.58,692.00 350.23,696.73 350.85,700.00 C351.47,703.27 352.02,704.93 352.55,706.60 C353.08,708.27 353.50,708.97 354.05,710.00 C354.60,711.03 355.13,711.80 355.85,712.80 C356.57,713.80 357.43,714.97 358.35,716.00 C359.27,717.03 360.35,718.03 361.35,719.00 C362.35,719.97 363.35,720.93 364.35,721.80 C365.35,722.67 366.18,723.30 367.35,724.20 C368.52,725.10 370.03,726.28 371.35,727.20 C372.68,728.12 374.64,729.28 375.30,729.70 C375.48,718.08 376.17,681.62 376.40,660.00 C376.63,638.38 376.58,620.00 376.70,600.00 C376.82,580.00 376.98,560.00 377.10,540.00 C377.22,520.00 377.22,503.33 377.40,480.00 C377.58,456.67 377.98,423.33 378.20,400.00 C378.42,376.67 378.45,358.67 378.70,340.00 C378.95,321.33 379.37,302.17 379.70,288.00 C380.03,273.83 380.33,263.37 380.70,255.00 C381.07,246.63 381.70,240.67 381.90,237.80 C382.12,240.67 382.68,246.63 383.20,255.00 C383.72,263.37 384.38,273.83 385.00,288.00 C385.62,302.17 386.32,321.33 386.90,340.00 C387.48,358.67 387.92,380.00 388.50,400.00 C389.08,420.00 389.68,436.67 390.40,460.00 C391.12,483.33 391.97,516.67 392.80,540.00 C393.63,563.33 394.65,585.00 395.40,600.00 C396.15,615.00 396.60,620.00 397.30,630.00 C398.00,640.00 399.00,653.33 399.60,660.00 C400.20,666.67 400.28,665.50 400.90,670.00 C401.52,674.50 402.57,682.00 403.30,687.00 C404.03,692.00 404.68,696.73 405.30,700.00 C405.92,703.27 406.47,704.93 407.00,706.60 C407.53,708.27 407.95,708.97 408.50,710.00 C409.05,711.03 409.58,711.80 410.30,712.80 C411.02,713.80 411.88,714.97 412.80,716.00 C413.72,717.03 414.80,718.03 415.80,719.00 C416.80,719.97 417.80,720.93 418.80,721.80 C419.80,722.67 420.63,723.30 421.80,724.20 C422.97,725.10 424.48,726.28 425.80,727.20 C427.12,728.12 429.09,729.28 429.75,729.70 C429.93,718.08 430.62,681.62 430.85,660.00 C431.08,638.38 431.03,620.00 431.15,600.00 C431.27,580.00 431.43,560.00 431.55,540.00 C431.67,520.00 431.67,503.33 431.85,480.00 C432.03,456.67 432.43,423.33 432.65,400.00 C432.87,376.67 432.90,358.67 433.15,340.00 C433.40,321.33 433.82,302.17 434.15,288.00 C434.48,273.83 434.78,263.80 435.15,255.00 C435.52,246.20 436.15,238.50 436.35,235.20 C436.57,238.50 437.13,246.20 437.65,255.00 C438.17,263.80 438.83,273.83 439.45,288.00 C440.07,302.17 440.77,321.33 441.35,340.00 C441.93,358.67 442.37,380.00 442.95,400.00 C443.53,420.00 444.13,436.67 444.85,460.00 C445.57,483.33 446.42,516.67 447.25,540.00 C448.08,563.33 449.10,585.00 449.85,600.00 C450.60,615.00 451.05,620.00 451.75,630.00 C452.45,640.00 453.45,653.33 454.05,660.00 C454.65,666.67 454.73,665.50 455.35,670.00 C455.97,674.50 457.02,682.00 457.75,687.00 C458.48,692.00 459.13,696.73 459.75,700.00 C460.37,703.27 460.92,704.93 461.45,706.60 C461.98,708.27 462.40,708.97 462.95,710.00 C463.50,711.03 464.03,711.80 464.75,712.80 C465.47,713.80 466.33,714.97 467.25,716.00 C468.17,717.03 469.25,718.03 470.25,719.00 C471.25,719.97 472.25,720.93 473.25,721.80 C474.25,722.67 475.08,723.30 476.25,724.20 C477.42,725.10 478.93,726.28 480.25,727.20 C481.57,728.12 483.54,729.28 484.20,729.70 C484.38,718.08 485.07,681.62 485.30,660.00 C485.53,638.38 485.48,620.00 485.60,600.00 C485.72,580.00 485.88,560.00 486.00,540.00 C486.12,520.00 486.12,503.33 486.30,480.00 C486.48,456.67 486.88,423.33 487.10,400.00 C487.32,376.67 487.35,358.67 487.60,340.00 C487.85,321.33 488.27,302.17 488.60,288.00 C488.93,273.83 489.23,263.83 489.60,255.00 C489.97,246.17 490.60,238.33 490.80,235.00 C491.02,238.33 491.58,246.17 492.10,255.00 C492.62,263.83 493.28,273.83 493.90,288.00 C494.52,302.17 495.22,321.33 495.80,340.00 C496.38,358.67 496.82,380.00 497.40,400.00 C497.98,420.00 498.58,436.67 499.30,460.00 C500.02,483.33 500.87,516.67 501.70,540.00 C502.53,563.33 503.55,585.00 504.30,600.00 C505.05,615.00 505.50,620.00 506.20,630.00 C506.90,640.00 507.90,653.33 508.50,660.00 C509.10,666.67 509.18,665.50 509.80,670.00 C510.42,674.50 511.47,682.00 512.20,687.00 C512.93,692.00 513.58,696.73 514.20,700.00 C514.82,703.27 515.37,704.93 515.90,706.60 C516.43,708.27 516.85,708.97 517.40,710.00 C517.95,711.03 518.48,711.80 519.20,712.80 C519.92,713.80 520.78,714.97 521.70,716.00 C522.62,717.03 523.70,718.03 524.70,719.00 C525.70,719.97 526.70,720.93 527.70,721.80 C528.70,722.67 529.53,723.30 530.70,724.20 C531.87,725.10 533.38,726.28 534.70,727.20 C536.03,728.12 537.99,729.28 538.65,729.70 C538.83,718.08 539.52,681.62 539.75,660.00 C539.98,638.38 539.93,620.00 540.05,600.00 C540.17,580.00 540.33,560.00 540.45,540.00 C540.57,520.00 540.57,503.33 540.75,480.00 C540.93,456.67 541.33,423.33 541.55,400.00 C541.77,376.67 541.80,358.67 542.05,340.00 C542.30,321.33 542.72,302.17 543.05,288.00 C543.38,273.83 543.68,263.83 544.05,255.00 C544.42,246.17 545.05,238.33 545.25,235.00 C545.47,238.33 546.03,246.17 546.55,255.00 C547.07,263.83 547.73,273.83 548.35,288.00 C548.97,302.17 549.67,321.33 550.25,340.00 C550.83,358.67 551.27,380.00 551.85,400.00 C552.43,420.00 553.03,436.67 553.75,460.00 C554.47,483.33 555.32,516.67 556.15,540.00 C556.98,563.33 558.00,585.00 558.75,600.00 C559.50,615.00 559.95,620.00 560.65,630.00 C561.35,640.00 562.35,653.33 562.95,660.00 C563.55,666.67 563.63,665.50 564.25,670.00 C564.87,674.50 565.92,682.00 566.65,687.00 C567.38,692.00 568.03,696.73 568.65,700.00 C569.27,703.27 569.82,704.93 570.35,706.60 C570.88,708.27 571.30,708.97 571.85,710.00 C572.40,711.03 572.93,711.80 573.65,712.80 C574.37,713.80 575.23,714.97 576.15,716.00 C577.07,717.03 578.15,718.03 579.15,719.00 C580.15,719.97 581.15,720.93 582.15,721.80 C583.15,722.67 583.98,723.30 585.15,724.20 C586.32,725.10 587.83,726.28 589.15,727.20 C590.48,728.12 592.44,729.28 593.10,729.70 C593.28,718.08 593.97,681.62 594.20,660.00 C594.43,638.38 594.38,620.00 594.50,600.00 C594.62,580.00 594.78,560.00 594.90,540.00 C595.02,520.00 595.02,503.33 595.20,480.00 C595.38,456.67 595.78,423.33 596.00,400.00 C596.22,376.67 596.25,358.67 596.50,340.00 C596.75,321.33 597.17,302.17 597.50,288.00 C597.83,273.83 598.13,263.83 598.50,255.00 C598.87,246.17 599.50,238.33 599.70,235.00 C599.92,238.33 600.48,246.17 601.00,255.00 C601.52,263.83 602.18,273.83 602.80,288.00 C603.42,302.17 604.12,321.33 604.70,340.00 C605.28,358.67 605.72,380.00 606.30,400.00 C606.88,420.00 607.48,436.67 608.20,460.00 C608.92,483.33 609.77,516.67 610.60,540.00 C611.43,563.33 612.45,585.00 613.20,600.00 C613.95,615.00 614.40,620.00 615.10,630.00 C615.80,640.00 616.80,653.33 617.40,660.00 C618.00,666.67 618.08,665.50 618.70,670.00 C619.32,674.50 620.37,682.00 621.10,687.00 C621.83,692.00 622.48,696.73 623.10,700.00 C623.72,703.27 624.27,704.93 624.80,706.60 C625.33,708.27 625.75,708.97 626.30,710.00 C626.85,711.03 627.38,711.80 628.10,712.80 C628.82,713.80 629.68,714.97 630.60,716.00 C631.52,717.03 632.60,718.03 633.60,719.00 C634.60,719.97 635.60,720.93 636.60,721.80 C637.60,722.67 638.43,723.30 639.60,724.20 C640.77,725.10 642.27,726.28 643.60,727.20 C644.93,728.12 646.89,729.28 647.55,729.70 C647.73,718.08 648.42,681.62 648.65,660.00 C648.88,638.38 648.83,620.00 648.95,600.00 C649.07,580.00 649.23,560.00 649.35,540.00 C649.47,520.00 649.47,503.33 649.65,480.00 C649.83,456.67 650.23,423.33 650.45,400.00 C650.67,376.67 650.70,358.67 650.95,340.00 C651.20,321.33 651.62,302.17 651.95,288.00 C652.28,273.83 652.58,263.70 652.95,255.00 C653.32,246.30 653.95,239.00 654.15,235.80 C654.37,239.00 654.93,246.30 655.45,255.00 C655.97,263.70 656.63,273.83 657.25,288.00 C657.87,302.17 658.57,321.33 659.15,340.00 C659.73,358.67 660.17,380.00 660.75,400.00 C661.33,420.00 661.93,436.67 662.65,460.00 C663.37,483.33 664.22,516.67 665.05,540.00 C665.88,563.33 666.90,585.00 667.65,600.00 C668.40,615.00 668.85,620.00 669.55,630.00 C670.25,640.00 671.25,653.33 671.85,660.00 C672.45,666.67 672.53,665.50 673.15,670.00 C673.77,674.50 674.82,682.00 675.55,687.00 C676.28,692.00 676.93,696.73 677.55,700.00 C678.17,703.27 678.72,704.93 679.25,706.60 C679.78,708.27 680.20,708.97 680.75,710.00 C681.30,711.03 681.83,711.80 682.55,712.80 C683.27,713.80 684.13,714.97 685.05,716.00 C685.97,717.03 687.05,718.03 688.05,719.00 C689.05,719.97 690.05,720.93 691.05,721.80 C692.05,722.67 692.88,723.30 694.05,724.20 C695.22,725.10 696.72,726.28 698.05,727.20 C699.38,728.12 701.34,729.28 702.00,729.70 C702.18,718.08 702.87,681.62 703.10,660.00 C703.33,638.38 703.28,620.00 703.40,600.00 C703.52,580.00 703.68,560.00 703.80,540.00 C703.92,520.00 703.92,503.33 704.10,480.00 C704.28,456.67 704.68,423.33 704.90,400.00 C705.12,376.67 705.15,358.67 705.40,340.00 C705.65,321.33 706.07,302.17 706.40,288.00 C706.73,273.83 707.03,263.70 707.40,255.00 C707.77,246.30 708.40,239.00 708.60,235.80 C708.82,239.00 709.38,246.30 709.90,255.00 C710.42,263.70 711.08,273.83 711.70,288.00 C712.32,302.17 713.02,321.33 713.60,340.00 C714.18,358.67 714.62,380.00 715.20,400.00 C715.78,420.00 716.38,436.67 717.10,460.00 C717.82,483.33 718.67,516.67 719.50,540.00 C720.33,563.33 721.35,585.00 722.10,600.00 C722.85,615.00 723.30,620.00 724.00,630.00 C724.70,640.00 725.70,653.33 726.30,660.00 C726.90,666.67 726.98,665.50 727.60,670.00 C728.22,674.50 729.27,682.00 730.00,687.00 C730.73,692.00 731.38,696.73 732.00,700.00 C732.62,703.27 733.17,704.93 733.70,706.60 C734.23,708.27 734.65,708.97 735.20,710.00 C735.75,711.03 736.28,711.80 737.00,712.80 C737.72,713.80 738.58,714.97 739.50,716.00 C740.42,717.03 741.50,718.03 742.50,719.00 C743.50,719.97 744.50,720.93 745.50,721.80 C746.50,722.67 747.33,723.30 748.50,724.20 C749.67,725.10 751.17,726.28 752.50,727.20 C753.83,728.12 755.79,729.28 756.45,729.70 C756.63,718.08 757.32,681.62 757.55,660.00 C757.78,638.38 757.73,620.00 757.85,600.00 C757.97,580.00 758.13,560.00 758.25,540.00 C758.37,520.00 758.37,503.33 758.55,480.00 C758.73,456.67 759.13,423.33 759.35,400.00 C759.57,376.67 759.60,358.67 759.85,340.00 C760.10,321.33 760.52,302.17 760.85,288.00 C761.18,273.83 761.48,263.83 761.85,255.00 C762.22,246.17 762.85,238.33 763.05,235.00 C763.27,238.33 763.83,246.17 764.35,255.00 C764.87,263.83 765.53,273.83 766.15,288.00 C766.77,302.17 767.47,321.33 768.05,340.00 C768.63,358.67 769.07,380.00 769.65,400.00 C770.23,420.00 770.83,436.67 771.55,460.00 C772.27,483.33 773.12,516.67 773.95,540.00 C774.78,563.33 775.80,585.00 776.55,600.00 C777.30,615.00 777.75,620.00 778.45,630.00 C779.15,640.00 780.15,653.33 780.75,660.00 C781.35,666.67 781.43,665.50 782.05,670.00 C782.67,674.50 783.72,682.00 784.45,687.00 C785.18,692.00 785.83,696.73 786.45,700.00 C787.07,703.27 787.62,704.93 788.15,706.60 C788.68,708.27 789.10,708.97 789.65,710.00 C790.20,711.03 790.73,711.80 791.45,712.80 C792.17,713.80 793.03,714.97 793.95,716.00 C794.87,717.03 795.95,718.03 796.95,719.00 C797.95,719.97 798.95,720.93 799.95,721.80 C800.95,722.67 801.78,723.30 802.95,724.20 C804.12,725.10 805.62,726.28 806.95,727.20 C808.28,728.12 810.24,729.28 810.90,729.70 C811.08,718.08 811.77,681.62 812.00,660.00 C812.23,638.38 812.18,620.00 812.30,600.00 C812.42,580.00 812.58,560.00 812.70,540.00 C812.82,520.00 812.82,503.33 813.00,480.00 C813.18,456.67 813.58,423.33 813.80,400.00 C814.02,376.67 814.05,358.67 814.30,340.00 C814.55,321.33 814.97,302.17 815.30,288.00 C815.63,273.83 815.93,263.70 816.30,255.00 C816.67,246.30 817.30,239.00 817.50,235.80 C817.72,239.00 818.28,246.30 818.80,255.00 C819.32,263.70 819.98,273.83 820.60,288.00 C821.22,302.17 821.92,321.33 822.50,340.00 C823.08,358.67 823.52,380.00 824.10,400.00 C824.68,420.00 825.28,436.67 826.00,460.00 C826.72,483.33 827.57,516.67 828.40,540.00 C829.23,563.33 830.25,585.00 831.00,600.00 C831.75,615.00 832.20,620.00 832.90,630.00 C833.60,640.00 834.60,653.33 835.20,660.00 C835.80,666.67 835.88,665.50 836.50,670.00 C837.12,674.50 838.17,682.00 838.90,687.00 C839.63,692.00 840.28,696.73 840.90,700.00 C841.52,703.27 842.07,704.93 842.60,706.60 C843.13,708.27 843.55,708.97 844.10,710.00 C844.65,711.03 845.18,711.80 845.90,712.80 C846.62,713.80 847.48,714.97 848.40,716.00 C849.32,717.03 850.40,718.03 851.40,719.00 C852.40,719.97 853.40,720.93 854.40,721.80 C855.40,722.67 856.23,723.30 857.40,724.20 C858.57,725.10 860.08,726.28 861.40,727.20 C862.73,728.12 864.69,729.28 865.35,729.70 C865.53,718.08 866.22,681.62 866.45,660.00 C866.68,638.38 866.63,620.00 866.75,600.00 C866.87,580.00 867.03,560.00 867.15,540.00 C867.27,520.00 867.27,503.33 867.45,480.00 C867.63,456.67 868.03,423.33 868.25,400.00 C868.47,376.67 868.50,358.67 868.75,340.00 C869.00,321.33 869.42,302.17 869.75,288.00 C870.08,273.83 870.38,263.83 870.75,255.00 C871.12,246.17 871.75,238.33 871.95,235.00 C872.17,238.33 872.73,246.17 873.25,255.00 C873.77,263.83 874.43,273.83 875.05,288.00 C875.67,302.17 876.37,321.33 876.95,340.00 C877.53,358.67 877.97,380.00 878.55,400.00 C879.13,420.00 879.73,436.67 880.45,460.00 C881.17,483.33 882.02,516.67 882.85,540.00 C883.68,563.33 884.70,585.00 885.45,600.00 C886.20,615.00 886.65,620.00 887.35,630.00 C888.05,640.00 889.05,653.33 889.65,660.00 C890.25,666.67 890.33,665.50 890.95,670.00 C891.57,674.50 892.62,682.00 893.35,687.00 C894.08,692.00 894.73,696.73 895.35,700.00 C895.97,703.27 896.52,704.93 897.05,706.60 C897.58,708.27 898.00,708.97 898.55,710.00 C899.10,711.03 899.63,711.80 900.35,712.80 C901.07,713.80 901.93,714.97 902.85,716.00 C903.77,717.03 904.85,718.03 905.85,719.00 C906.85,719.97 907.85,720.93 908.85,721.80 C909.85,722.67 910.68,723.30 911.85,724.20 C913.02,725.10 914.52,726.28 915.85,727.20 C917.18,728.12 919.07,729.23 919.80,729.70 C920.53,730.17 920.17,729.95 920.25,730.00" fill="none" stroke="#a95bc6" stroke-width="2.8" stroke-linejoin="round"/>
</svg>
</body></html>
